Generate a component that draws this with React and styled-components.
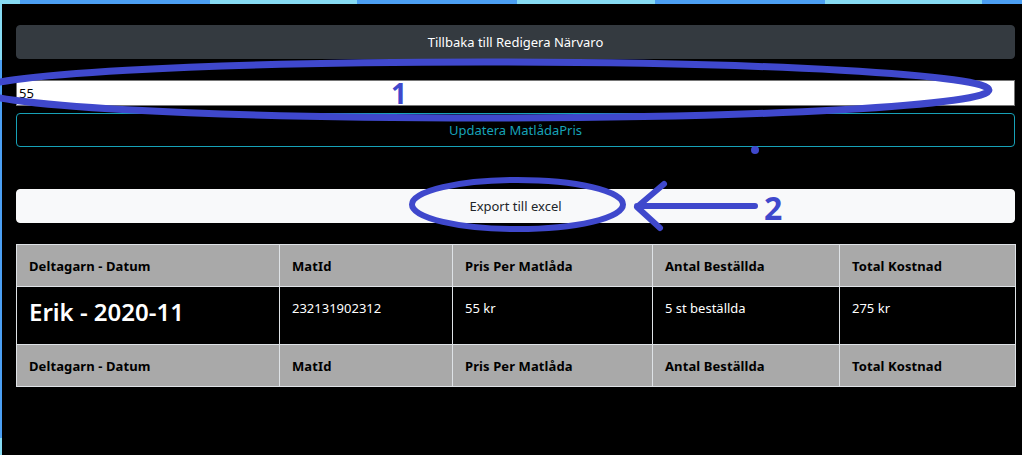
import React from "react";
import styled, { createGlobalStyle } from "styled-components";

const ink = "#3f48cc";
const cyan = "#86dbf3";
const blue = "#4b9ff3";

const GlobalStyle = createGlobalStyle`
  html, body {
    margin: 0;
    padding: 0;
    background: #000;
  }
  body {
    font-family: "Noto Sans", "Open Sans", sans-serif;
  }
`;

const Desktop = styled.div`
  position: relative;
  width: 1022px;
  height: 455px;
  overflow: hidden;
  box-sizing: border-box;
  padding: 4px 0 0 2px;
  background:
    linear-gradient(to right, ${cyan} 0 20px, ${blue} 20px 210px, ${cyan} 210px 357px, ${blue} 357px 517px, ${cyan} 517px 655px, ${blue} 655px 825px, ${cyan} 825px 982px, ${blue} 982px) top left / 100% 4px no-repeat,
    linear-gradient(to bottom, ${cyan} 0 60px, ${blue} 60px 438px, ${cyan} 438px) top left / 2px 100% no-repeat,
    #000;
`;

const Panel = styled.main`
  height: 100%;
  box-sizing: border-box;
  background: #000;
  border-top-left-radius: 4px;
  padding: 21px 7px 0 14px;
  display: flex;
  flex-direction: column;
`;

const variants = {
  dark: "background:#343a40;border-color:#343a40;color:#fff;",
  info: "background:transparent;border-color:#17a2b8;color:#17a2b8;",
  light: "background:#f8f9fa;border-color:#f8f9fa;color:#212529;",
};

const Button = styled.button`
  height: 34px;
  width: 100%;
  box-sizing: border-box;
  border: 1px solid;
  border-radius: 4px;
  font-family: "Noto Sans", sans-serif;
  font-size: 13px;
  cursor: pointer;
  margin-top: ${(p) => p.$gap || 0}px;
  ${(p) => variants[p.$variant]}
`;

const PriceInput = styled.input`
  display: block;
  margin-top: 21px;
  height: 26px;
  width: 100%;
  box-sizing: border-box;
  border: 1px solid #767676;
  padding: 0 2px;
  font-family: "Noto Sans", sans-serif;
  font-size: 13px;
  color: #000;
  background: #fff;
  outline: none;
`;

const Table = styled.table`
  margin-top: 21px;
  width: 999px;
  border-collapse: collapse;
  table-layout: fixed;
  color: #fff;
  font-size: 13px;
`;

const HeadRow = styled.tr`
  height: 42px;
  background: #a9a9a9;
  color: #000;
`;

const Th = styled.th`
  border: 1px solid #dee2e6;
  padding: 0 12px;
  text-align: left;
  font-weight: 700;
  font-size: 13px;
  letter-spacing: 0.1px;
`;

const BodyRow = styled.tr`
  height: 58px;
`;

const Td = styled.td`
  border: 1px solid #dee2e6;
  padding: 12px 12px 0;
  vertical-align: top;
  line-height: 18px;
`;

const Name = styled.h3`
  margin: -2px 0 0;
  font-size: 24px;
  font-weight: 600;
  line-height: 30px;
`;

const Overlay = styled.svg`
  position: absolute;
  inset: 0;
  pointer-events: none;
`;

const Mark = styled.text`
  font-family: "Noto Sans", sans-serif;
  font-weight: 700;
  fill: ${ink};
`;

const widths = [263, 173, 200, 187, 176];
const heads = ["Deltagarn - Datum", "MatId", "Pris Per Matlåda", "Antal Beställda", "Total Kostnad"];

const HeadCells = () => heads.map((h) => <Th key={h}>{h}</Th>);

export default function App() {
  return (
    <>
      <GlobalStyle />
      <Desktop>
        <Panel>
          <Button $variant="dark">Tillbaka till Redigera Närvaro</Button>
          <PriceInput defaultValue="55" />
          <Button $variant="info" $gap={7}>Updatera MatlådaPris</Button>
          <Button $variant="light" $gap={42}>Export till excel</Button>
          <Table>
            <colgroup>
              {widths.map((w, i) => (
                <col key={i} style={{ width: w }} />
              ))}
            </colgroup>
            <thead>
              <HeadRow>
                <HeadCells />
              </HeadRow>
            </thead>
            <tbody>
              <BodyRow>
                <Td>
                  <Name>Erik - 2020-11</Name>
                </Td>
                <Td>232131902312</Td>
                <Td>55 kr</Td>
                <Td>5 st beställda</Td>
                <Td>275 kr</Td>
              </BodyRow>
            </tbody>
            <tfoot>
              <HeadRow>
                <HeadCells />
              </HeadRow>
            </tfoot>
          </Table>
        </Panel>

        <Overlay width="1022" height="455" viewBox="0 0 1022 455">
          <g fill="none" stroke={ink} strokeLinecap="round" strokeLinejoin="round">
            <ellipse cx="484" cy="90" rx="505" ry="28" strokeWidth="7" />
            <ellipse cx="517.5" cy="204.5" rx="105.5" ry="24.5" strokeWidth="6" />
            <path d="M755 206 H637 M664 184 L637 207 L660 228" strokeWidth="6" />
          </g>
          <circle cx="755" cy="150" r="4" fill={ink} />
          <Mark x="391" y="104" fontSize="28">1</Mark>
          <Mark x="764" y="220" fontSize="32">2</Mark>
        </Overlay>
      </Desktop>
    </>
  );
}
